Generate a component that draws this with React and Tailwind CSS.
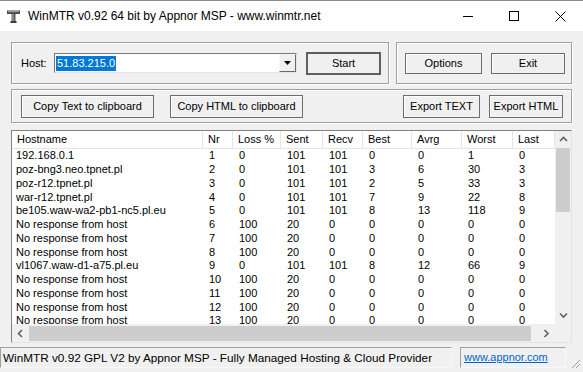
import React from 'react'

const COLS = [
  { key: 'host', label: 'Hostname', w: 191 },
  { key: 'nr', label: 'Nr', w: 30 },
  { key: 'loss', label: 'Loss %', w: 48 },
  { key: 'sent', label: 'Sent', w: 42 },
  { key: 'recv', label: 'Recv', w: 40 },
  { key: 'best', label: 'Best', w: 49 },
  { key: 'avrg', label: 'Avrg', w: 50 },
  { key: 'worst', label: 'Worst', w: 51 },
  { key: 'last', label: 'Last', w: 42 },
]

const NR = 'No response from host'

const ROWS = [
  ['192.168.0.1', 1, 0, 101, 101, 0, 0, 1, 0],
  ['poz-bng3.neo.tpnet.pl', 2, 0, 101, 101, 3, 6, 30, 3],
  ['poz-r12.tpnet.pl', 3, 0, 101, 101, 2, 5, 33, 3],
  ['war-r12.tpnet.pl', 4, 0, 101, 101, 7, 9, 22, 8],
  ['be105.waw-wa2-pb1-nc5.pl.eu', 5, 0, 101, 101, 8, 13, 118, 9],
  [NR, 6, 100, 20, 0, 0, 0, 0, 0],
  [NR, 7, 100, 20, 0, 0, 0, 0, 0],
  [NR, 8, 100, 20, 0, 0, 0, 0, 0],
  ['vl1067.waw-d1-a75.pl.eu', 9, 0, 101, 101, 8, 12, 66, 9],
  [NR, 10, 100, 20, 0, 0, 0, 0, 0],
  [NR, 11, 100, 20, 0, 0, 0, 0, 0],
  [NR, 12, 100, 20, 0, 0, 0, 0, 0],
  [NR, 13, 100, 20, 0, 0, 0, 0, 0],
]

// botón clásico de Windows
const Btn = ({ children, className = '', def = false }) => (
  <button
    type="button"
    className={`flex items-center justify-center bg-[#f0f0f0] text-black text-[11px] leading-none ${def ? 'border-2 border-[#5f5f5f]' : 'border border-[#6d6d6d] shadow-[inset_1px_1px_0_#fff]'} ${className}`}
  >
    {children}
  </button>
)

// marco grabado de los grupos
const Group = ({ children, className = '' }) => (
  <div className={`border border-[#a0a0a0] shadow-[inset_1px_1px_0_#fff,1px_1px_0_#fff] ${className}`}>
    {children}
  </div>
)

const Chevron = ({ dir }) => {
  const d = {
    up: 'M1 5 L4.5 1.5 L8 5',
    down: 'M1 1.5 L4.5 5 L8 1.5',
    left: 'M5 1 L1.5 4.5 L5 8',
    right: 'M1.5 1 L5 4.5 L1.5 8',
  }[dir]
  const vert = dir === 'up' || dir === 'down'
  return (
    <svg width={vert ? 9 : 7} height={vert ? 7 : 9} viewBox={vert ? '0 0 9 7' : '0 0 7 9'}>
      <path d={d} fill="none" stroke="#606060" strokeWidth="1.6" />
    </svg>
  )
}

export default function App() {
  return (
    <div className="w-[583px] h-[372px] overflow-hidden bg-[#f0f0f0] flex flex-col font-['Liberation_Sans',Arial,sans-serif] text-black">
      {/* Barra de título */}
      <div className="h-[31px] shrink-0 bg-white flex items-center border-t border-[#8a8a8a]">
        <svg width="13" height="13" viewBox="0 0 13 13" className="ml-[7px] mt-[1px]">
          <rect x="0" y="0.5" width="13" height="3.5" fill="#4a4a4a" />
          <rect x="1" y="1" width="11" height="1.2" fill="#9a9a9a" />
          <rect x="4.5" y="4" width="4" height="7.5" fill="#5a5a5a" />
          <rect x="5.3" y="4" width="1.2" height="7" fill="#a8a8a8" />
          <rect x="3.5" y="11" width="6" height="2" fill="#3a3a3a" />
        </svg>
        <span className="ml-[8px] text-[12px] leading-none">
          WinMTR v0.92 64 bit by Appnor MSP - www.winmtr.net
        </span>
        <div className="ml-auto flex items-center h-full">
          <div className="w-[46px] h-full flex items-center justify-center">
            <div className="w-[10px] h-px bg-black" />
          </div>
          <div className="w-[46px] h-full flex items-center justify-center">
            <div className="w-[10px] h-[10px] border border-black" />
          </div>
          <div className="w-[46px] h-full flex items-center justify-center">
            <svg width="11" height="11" viewBox="0 0 11 11">
              <path d="M0.5 0.5 L10.5 10.5 M10.5 0.5 L0.5 10.5" stroke="#000" strokeWidth="1" />
            </svg>
          </div>
        </div>
      </div>

      {/* Cuerpo */}
      <div className="flex-1 flex flex-col px-[11px] pt-[11px]">
        <div className="flex">
          <Group className="w-[378px] h-[42px] flex items-center pl-[9px]">
            <span className="text-[11px] w-[33px]">Host:</span>
            <div className="w-[243px] h-[20px] bg-white border border-[#7a7a7a] border-r-[#e3e3e3] border-b-[#e3e3e3] flex items-center pl-[1px]">
              <span className="bg-[#0078d7] text-white text-[11px] leading-[15px] px-[1px]">51.83.215.0</span>
              <div className="ml-auto w-[17px] h-[18px] bg-[#f0f0f0] border border-[#f8f8f8] border-r-[#6a6a6a] border-b-[#6a6a6a] flex items-center justify-center">
                <svg width="7" height="4" viewBox="0 0 7 4">
                  <path d="M0 0 H7 L3.5 4 Z" fill="#000" />
                </svg>
              </div>
            </div>
            <Btn def className="ml-[9px] w-[75px] h-[23px] text-[11px]">Start</Btn>
          </Group>
          <Group className="ml-[7px] flex-1 h-[42px] flex items-center pl-[8px] gap-[9px]">
            <Btn className="w-[77px] h-[21px]">Options</Btn>
            <Btn className="w-[74px] h-[21px]">Exit</Btn>
          </Group>
        </div>

        <Group className="mt-[5px] h-[34px] flex items-center pl-[9px] pr-[8px]">
          <Btn className="w-[133px] h-[23px]">Copy Text to clipboard</Btn>
          <Btn className="ml-[16px] w-[133px] h-[23px]">Copy HTML to clipboard</Btn>
          <Btn className="ml-auto w-[77px] h-[23px]">Export TEXT</Btn>
          <Btn className="ml-[9px] w-[74px] h-[23px]">Export HTML</Btn>
        </Group>

        {/* Lista */}
        <div className="mt-[7px] h-[213px] border border-[#828282] border-r-[#e3e3e3] border-b-[#e3e3e3] bg-white flex flex-col overflow-hidden">
          <div className="flex flex-1 min-h-0">
            <div className="flex-1 overflow-hidden text-[11px]">
              <div className="flex h-[18px] border-b border-[#e5e5e5]">
                {COLS.map((c) => (
                  <div
                    key={c.key}
                    style={{ width: c.w }}
                    className="shrink-0 h-full border-r border-[#e5e5e5] flex items-center pl-[5px]"
                  >
                    {c.label}
                  </div>
                ))}
              </div>
              {ROWS.map((r, i) => (
                <div key={i} className="flex h-[13.75px] items-center">
                  {r.map((v, j) => (
                    <div
                      key={j}
                      style={{ width: COLS[j].w }}
                      className={`shrink-0 leading-none ${j === 0 ? 'pl-[4px]' : 'pl-[6px]'}`}
                    >
                      {v}
                    </div>
                  ))}
                </div>
              ))}
            </div>
            {/* Barra vertical */}
            <div className="w-[16px] shrink-0 bg-[#f0f0f0] flex flex-col items-center">
              <div className="h-[17px] flex items-center justify-center">
                <Chevron dir="up" />
              </div>
              <div className="w-[14px] h-[64px] bg-[#cdcdcd]" />
              <div className="mt-auto h-[17px] flex items-center justify-center">
                <Chevron dir="down" />
              </div>
            </div>
          </div>
          {/* Barra horizontal */}
          <div className="h-[18px] shrink-0 flex">
            <div className="flex-1 bg-[#f0f0f0] flex items-center">
              <div className="w-[17px] flex items-center justify-center">
                <Chevron dir="left" />
              </div>
              <div className="w-[502px] h-[15px] bg-[#cdcdcd]" />
              <div className="ml-auto w-[17px] flex items-center justify-center">
                <Chevron dir="right" />
              </div>
            </div>
            <div className="w-[16px] bg-[#f0f0f0]" />
          </div>
        </div>
      </div>

      {/* Barra de estado */}
      <div className="h-[27px] shrink-0 flex items-start pt-[2px] text-[11.75px] relative">
        <div className="w-[452px] h-[21px] border border-[#a0a0a0] border-r-[#f8f8f8] border-b-[#f8f8f8] flex items-center pl-[2px] whitespace-nowrap overflow-hidden">
          WinMTR v0.92 GPL V2 by Appnor MSP - Fully Managed Hosting &amp; Cloud Provider
        </div>
        <div className="ml-[8px] w-[106px] h-[21px] border border-[#a0a0a0] border-r-[#f8f8f8] border-b-[#f8f8f8] flex items-center pl-[3px]">
          <span className="text-[#0066cc] underline text-[11px]">www.appnor.com</span>
        </div>
        <svg width="12" height="12" viewBox="0 0 12 12" className="absolute right-[2px] bottom-[3px]">
          <path d="M11 3 L3 11 M11 7 L7 11" stroke="#a0a0a0" strokeWidth="1" />
        </svg>
      </div>
    </div>
  )
}
